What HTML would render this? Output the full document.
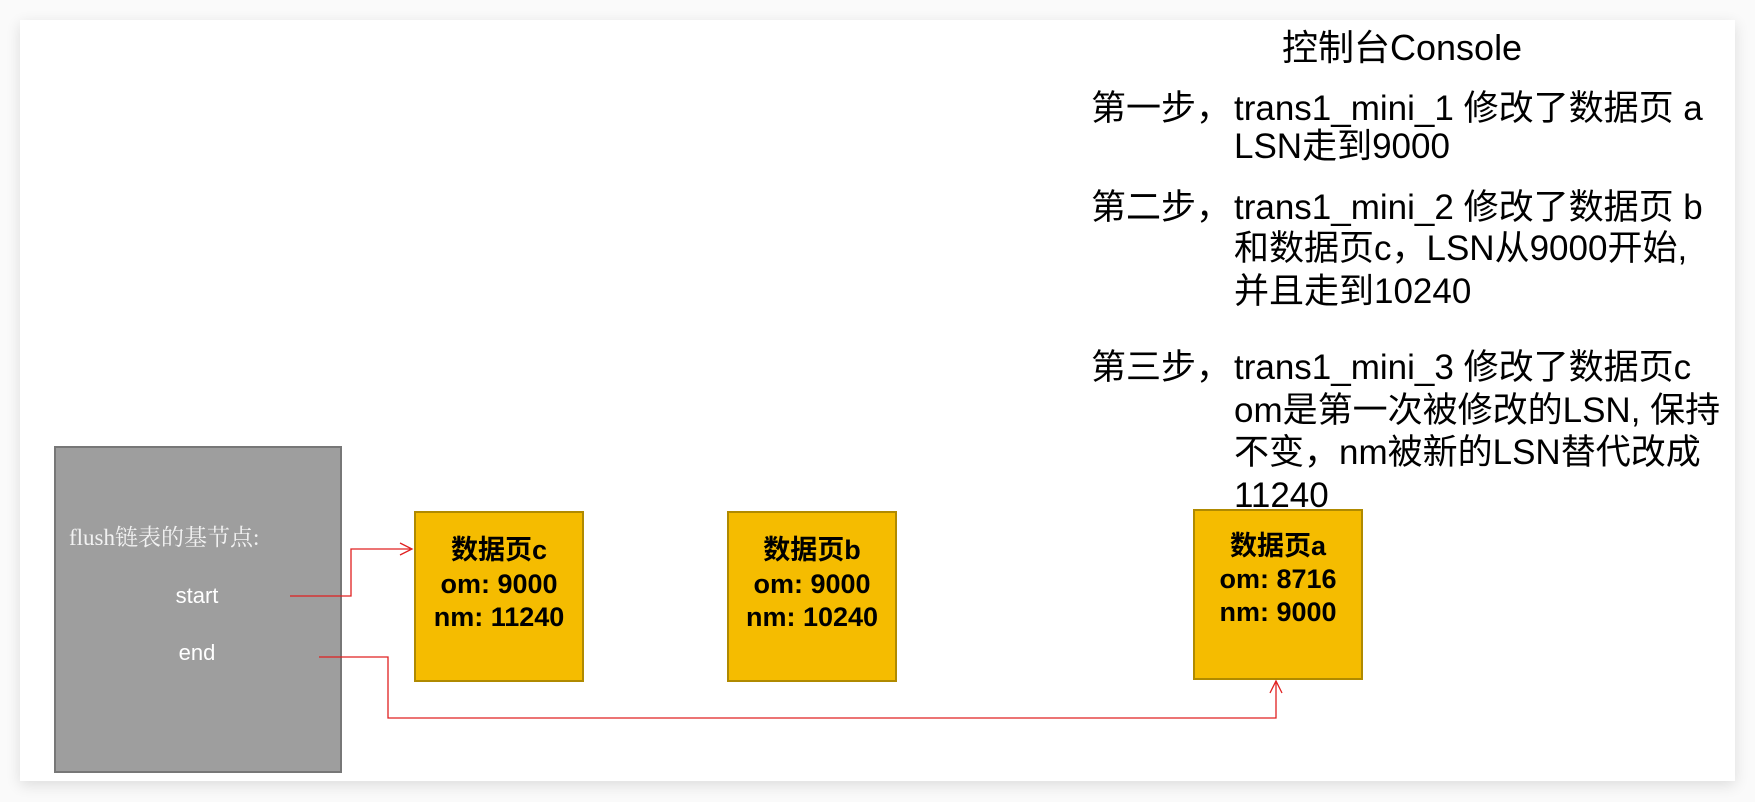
<!DOCTYPE html>
<html><head><meta charset="utf-8"><style>
body{margin:0;width:1755px;height:802px;background:#fafafa;position:relative;overflow:hidden;font-family:"Liberation Sans","Noto Sans CJK SC",sans-serif}
.canvas{position:absolute;left:20px;top:20px;width:1715px;height:761px;background:#fff;box-shadow:0 4px 14px rgba(0,0,0,0.12)}
.a{position:absolute;white-space:nowrap}
.gray{position:absolute;left:54px;top:446px;width:284px;height:323px;background:#9e9e9e;border:2px solid #777}
.box{position:absolute;width:166px;height:167px;background:#f5bc00;border:2px solid #b08a00}
.bt{position:absolute;left:0;width:100%;text-align:center;font-weight:bold;font-size:27px;line-height:30px;color:#000}
.t{font-size:35px;line-height:40px;color:#000}
</style></head><body>
<div class="canvas"></div>
<div class="gray"></div>
<div class="a" style="left:69px;top:525px;font-size:23px;line-height:26px;color:#f2f2f2;font-family:'Liberation Serif','Noto Serif CJK SC',serif">flush链表的基节点:</div>
<div class="a" style="left:147px;width:100px;text-align:center;top:583px;font-size:22px;line-height:26px;color:#fff">start</div>
<div class="a" style="left:147px;width:100px;text-align:center;top:640px;font-size:22px;line-height:26px;color:#fff">end</div>

<div class="box" style="left:414px;top:511px"><div class="bt" style="top:22px">数据页c</div><div class="bt" style="top:56px">om: 9000</div><div class="bt" style="top:89px">nm: 11240</div></div>
<div class="box" style="left:727px;top:511px"><div class="bt" style="top:22px">数据页b</div><div class="bt" style="top:56px">om: 9000</div><div class="bt" style="top:89px">nm: 10240</div></div>
<div class="box" style="left:1193px;top:509px"><div class="bt" style="top:20px">数据页a</div><div class="bt" style="top:53px">om: 8716</div><div class="bt" style="top:86px">nm: 9000</div></div>

<svg class="a" style="left:0;top:0" width="1755" height="802">
<polyline points="290,596 351,596 351,549 412,549" fill="none" stroke="#e02020" stroke-width="1.3"/>
<polyline points="400,543 412,549 400,555" fill="none" stroke="#e02020" stroke-width="1.3"/>
<polyline points="319,657 388,657 388,718 1276,718 1276,681" fill="none" stroke="#e02020" stroke-width="1.3"/>
<polyline points="1270,693 1276,681 1282,693" fill="none" stroke="#e02020" stroke-width="1.3"/>
</svg>

<div class="a t" style="left:1282px;top:28px;font-size:36px">控制台Console</div>
<div class="a t" style="left:1091px;top:89px">第一步，</div>
<div class="a t" style="left:1234px;top:89px">trans1_mini_1 修改了数据页 a</div>
<div class="a t" style="left:1234px;top:127px">LSN走到9000</div>
<div class="a t" style="left:1091px;top:188px">第二步，</div>
<div class="a t" style="left:1234px;top:188px">trans1_mini_2 修改了数据页 b</div>
<div class="a t" style="left:1234px;top:229px">和数据页c，LSN从9000开始,</div>
<div class="a t" style="left:1234px;top:272px">并且走到10240</div>
<div class="a t" style="left:1091px;top:348px">第三步，</div>
<div class="a t" style="left:1234px;top:348px">trans1_mini_3 修改了数据页c</div>
<div class="a t" style="left:1234px;top:391px">om是第一次被修改的LSN, 保持</div>
<div class="a t" style="left:1234px;top:433px">不变，nm被新的LSN替代改成</div>
<div class="a t" style="left:1234px;top:476px">11240</div>
</body></html>
